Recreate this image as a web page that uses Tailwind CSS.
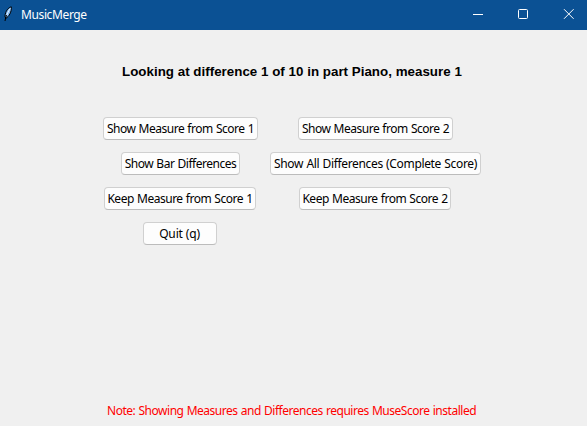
<!DOCTYPE html>
<html lang="en">
<head>
<meta charset="utf-8">
<title>MusicMerge</title>
<script src="https://cdn.jsdelivr.net/npm/@tailwindcss/browser@4"></script>
</head>
<body class="w-[587px] h-[426px] overflow-hidden bg-[#f0f0f0] flex flex-col font-['Noto_Sans','Open_Sans',sans-serif] text-[12px] text-black whitespace-nowrap">
<header class="h-[30px] shrink-0 bg-[#0b5194] text-white flex items-center">
  <svg class="ml-[3px] w-[10px] h-[16px] shrink-0 -mt-[2px]" viewBox="0 0 10 16"><path d="M8.300.8C5.500 1.500 2.200 5 2 10.500l.8 1.800C6 10.500 8.800 6 8.300.8Z" fill="#7fb5ee" stroke="#000" stroke-width="1"/><path d="M7.300 2.500C5.500 5 4.300 7.500 3.500 10" stroke="#e8f4ff" stroke-width="1" fill="none"/><path d="M3.500 9C2.800 11 2.300 13 2 15" stroke="#000" stroke-width="1" fill="none"/></svg>
  <span class="ml-[8px] leading-[16px] tracking-[-0.380px]">MusicMerge</span>
  <div class="ml-auto flex h-full items-center">
    <svg class="w-[45px] h-[30px]" viewBox="0 0 45 30" fill="none" stroke="#fff"><path d="M17 14.500h10"/></svg>
    <svg class="w-[45px] h-[30px]" viewBox="0 0 45 30" fill="none" stroke="#fff"><rect x="17.500" y="9.500" width="9" height="9" rx="1"/></svg>
    <svg class="w-[41px] h-[30px]" viewBox="0 0 41 30" fill="none" stroke="#fff"><path d="M18 9.200l9.600 9.600M27.600 9.200L18 18.800"/></svg>
  </div>
</header>
<main class="flex-1 flex flex-col">
  <h1 class="mt-[33px] pl-[122px] h-[18px] leading-[18px] font-['Liberation_Sans',Arial,sans-serif] font-bold text-[13.330px] tracking-[0.025px]">Looking at difference 1 of 10 in part Piano, measure 1</h1>
  <div class="mt-[36px] ml-[103px] grid grid-cols-[155px_211px] gap-x-[12px] gap-y-[12px] justify-items-center [word-spacing:0.5px]">
    <button class="w-[155px] h-[23px] rounded-[4px] border border-[#d0d0d0] border-b-[#bcbcbc] bg-[#fdfdfd] leading-[21px] tracking-[-0.480px] [word-spacing:0.5px]">Show Measure from Score 1</button>
    <button class="w-[155px] h-[23px] rounded-[4px] border border-[#d0d0d0] border-b-[#bcbcbc] bg-[#fdfdfd] leading-[21px] tracking-[-0.480px] [word-spacing:0.5px]">Show Measure from Score 2</button>
    <button class="w-[119px] h-[23px] rounded-[4px] border border-[#d0d0d0] border-b-[#bcbcbc] bg-[#fdfdfd] leading-[21px] tracking-[-0.480px] [word-spacing:0.5px]">Show Bar Differences</button>
    <button class="w-[211px] h-[23px] rounded-[4px] border border-[#d0d0d0] border-b-[#bcbcbc] bg-[#fdfdfd] leading-[21px] tracking-[-0.340px] [word-spacing:0.5px]">Show All Differences (Complete Score)</button>
    <button class="mr-px w-[152px] h-[23px] rounded-[4px] border border-[#d0d0d0] border-b-[#bcbcbc] bg-[#fdfdfd] leading-[21px] tracking-[-0.480px] [word-spacing:0.5px]">Keep Measure from Score 1</button>
    <button class="mr-px w-[152px] h-[23px] rounded-[4px] border border-[#d0d0d0] border-b-[#bcbcbc] bg-[#fdfdfd] leading-[21px] tracking-[-0.480px] [word-spacing:0.5px]">Keep Measure from Score 2</button>
    <button class="mr-px w-[74px] h-[23px] rounded-[4px] border border-[#d0d0d0] border-b-[#bcbcbc] bg-[#fdfdfd] pr-[1px] leading-[21px] tracking-[-0.150px]">Quit (q)</button>
  </div>
  <p class="mt-auto mb-[7px] pl-[107px] leading-[16px] text-[#ff0000] tracking-[-0.475px] [word-spacing:0.5px]">Note: Showing Measures and Differences requires MuseScore installed</p>
</main>
</body>
</html>
